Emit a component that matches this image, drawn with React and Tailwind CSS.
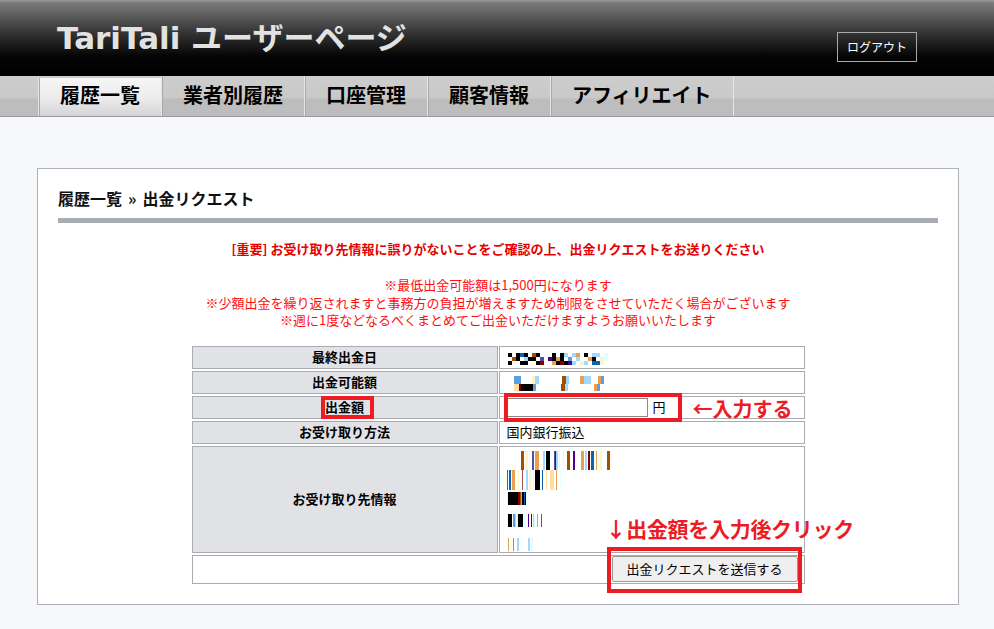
import React from "react";

const C = {
  k: "#000000", b: "#0a64b4", o: "#e8a050", r: "#a05000", p: "#500090",
  l: "#a0d8ff", c: "#fff4c8", y: "#ffe0a0", w: "#e0ffff", m: "#5050a0",
  d: "#800000", s: "#5aa0e0", n: "#a05050",
};

function stripeRects(str, x0, y, h, key) {
  const out = [];
  let i = 0;
  while (i < str.length) {
    const ch = str[i];
    let j = i;
    while (j < str.length && str[j] === ch) j++;
    if (ch !== ".") out.push(<rect key={key + "-" + i} x={x0 + i} y={y} width={j - i} height={h} fill={C[ch]} />);
    i = j;
  }
  return out;
}

function blockRects(rows, x0, y0, bw, bh, key) {
  const out = [];
  rows.forEach((row, ri) => {
    row.split("").forEach((ch, ci) => {
      if (ch !== ".") out.push(<rect key={key + ri + "-" + ci} x={x0 + ci * bw} y={y0 + ri * bh} width={bw} height={bh} fill={C[ch]} />);
    });
  });
  return out;
}

function Mosaic1() {
  return (
    <svg width="110" height="21" className="block">
      {blockRects(["k.kbk.rk...k.kl.lo.k.ll.w", ".rk.lkk.m.pkok.s.l..ok.cw", "k..kk..kd..okdkpl.cl.bbc."], 8, 6, 4, 4, "a")}
    </svg>
  );
}

function Mosaic2() {
  return (
    <svg width="110" height="21" className="block">
      {stripeRects("sssssss...........cccllll.......................rrrrlll...........oooolllllll.......ooosss", 14, 4, 8, "t")}
      {stripeRects("yyyyyddkkkkkkkkkkkksss.........................rrrrlll..........................ooosss", 14, 12, 7, "u")}
    </svg>
  );
}

function Mosaic5() {
  return (
    <svg width="130" height="107" className="block">
      {stripeRects("rrr.ccc.w..mm.oooo....ll.kkkk....mpll.c...c...rrr...pp......ooo.ll.dd.bbb..o...cc.....rrr", 21, 4, 19, "l1")}
      {stripeRects("r.bb.ooo...c...n...ll.cc..w.kkkkk..b...y...yyyy..o...w", 7, 23, 20, "l2")}
      {stripeRects("ckkkkkkkkkkdprokkbk", 7, 45, 13, "l3")}
      {stripeRects("ckkkk.ssl.ckkkkk.w...p..p.lw..o...r", 7, 67, 13, "l4")}
      {stripeRects("o....s...ll.........ll.cw", 8, 91, 13, "l5")}
    </svg>
  );
}

const leftCell = "bg-[#e1e2e6] border border-[#aaabb0] flex items-center justify-center font-bold text-[13px] text-black";
const rightCell = "bg-white border border-[#aaabb0] text-[13px] text-black";

export default function App() {
  return (
    <div className="min-h-[629px] bg-[#f7f8fc]" style={{ fontFamily: '"Noto Sans CJK JP", "Noto Sans", sans-serif' }}>
      {/* Header */}
      <div className="h-[76px] bg-[linear-gradient(to_bottom,#9a9a9a_0px,#7a7a7a_3px,#3a3a3a_30px,#050505_56px,#000_76px)] flex justify-between">
        <div
          className="ml-[57px] mt-[18px] text-[31px] font-bold text-[#e2e2e2] leading-[40px]"
          style={{ fontFamily: '"DejaVu Sans", "Noto Sans CJK JP", sans-serif' }}
        >
          TariTali ユーザーページ
        </div>
        <div className="mr-[77px] mt-[32px] w-[80px] h-[30px] border border-[#a8a8a8] flex items-center justify-center text-[12px] text-white">
          ログアウト
        </div>
      </div>

      {/* Nav */}
      <div className="h-[41px] bg-[linear-gradient(to_bottom,#cdcdcd_0px,#c9c9c9_22px,#bdbdbd_23px,#bdbdbd_40px)] border-b border-[#9a9a9a] flex pl-[38px]">
        {["履歴一覧", "業者別履歴", "口座管理", "顧客情報", "アフィリエイト"].map((t, i) => (
          <div
            key={t}
            className={
              "border-l border-[#e6e6e6] shadow-[inset_1px_0_0_#a9a9a9] px-[21px] flex items-center text-[20px] font-bold text-black leading-none " +
              (i === 0
                ? "bg-[linear-gradient(to_bottom,#f6f6f6_0px,#ececec_20px,#d4d4d4_38px)] mt-[2px] h-[38px] pb-[4px]"
                : "h-[40px] pb-[2px]")
            }
          >
            {t}
          </div>
        ))}
        <div className="h-[40px] border-l border-[#e6e6e6] shadow-[inset_1px_0_0_#a9a9a9]" />
      </div>

      {/* Panel */}
      <div className="pt-[51px] pb-[24px]">
        <div className="ml-[37px] w-[922px] bg-white border border-[#aeb0b8] px-[20px] pt-[17px] pb-[20px]">
          <div className="text-[16px] font-bold text-[#111] leading-[24px]">
            履歴一覧<span className="mx-[6px]">»</span>出金リクエスト
          </div>
          <div className="mt-[8px] h-[5px] bg-[#a8acb4]" />

          <div className="mt-[17px] text-center text-[13px] font-bold text-[#e60000] leading-[18px]">
            [重要] お受け取り先情報に誤りがないことをご確認の上、出金リクエストをお送りください
          </div>
          <div className="mt-[18px] text-center text-[13px] text-[#ff1010] leading-[17.5px]">
            <div>※最低出金可能額は1,500円になります</div>
            <div>※少額出金を繰り返されますと事務方の負担が増えますため制限をさせていただく場合がございます</div>
            <div>※週に1度などなるべくまとめてご出金いただけますようお願いいたします</div>
          </div>

          <div className="relative mx-auto mt-[17px] w-[613px] grid grid-cols-[306px_306px] gap-x-px gap-y-[2px]">
            <div className={leftCell + " h-[23px]"}>最終出金日</div>
            <div className={rightCell + " h-[23px]"}><Mosaic1 /></div>

            <div className={leftCell + " h-[23px]"}>出金可能額</div>
            <div className={rightCell + " h-[23px]"}><Mosaic2 /></div>

            <div className={leftCell + " h-[23px]"}>出金額</div>
            <div className={rightCell + " h-[23px] flex items-center pl-[6px]"}>
              <div className="w-[142px] h-[19px] border border-[#8a8a8a] bg-white" />
              <span className="ml-[5px] text-[13px] text-black">円</span>
            </div>

            <div className={leftCell + " h-[23px]"}>お受け取り方法</div>
            <div className={rightCell + " h-[23px] flex items-center pl-[7px]"}>国内銀行振込</div>

            <div className={leftCell + " h-[107px]"}>お受け取り先情報</div>
            <div className={rightCell + " h-[107px]"}><Mosaic5 /></div>

            <div className="col-span-2 h-[29px] border border-[#aaabb0] bg-white flex justify-end items-start pr-[6px]">
              <button className="w-[186px] h-[26px] bg-[#efefef] border border-[#9a9a9a] rounded-[2px] text-[13px] text-black leading-none">
                出金リクエストを送信する
              </button>
            </div>

            {/* annotations */}
            <div className="absolute left-[129px] top-[50px] w-[53px] h-[23px] border-4 border-[#ed1c24]" />
            <div className="absolute left-[312px] top-[47px] w-[178px] h-[29px] border-4 border-[#ed1c24]" />
            <div className="absolute left-[501px] top-[49px] text-[20px] font-bold text-[#ed1c24] leading-[28px] whitespace-nowrap">
              ←入力する
            </div>
            <div className="absolute left-[414px] top-[168px] text-[21px] font-bold text-[#ed1c24] leading-[28px] whitespace-nowrap tracking-[-0.3px]">
              ↓出金額を入力後クリック
            </div>
            <div className="absolute left-[415px] top-[201px] w-[195px] h-[46px] border-4 border-[#ed1c24]" />
          </div>
        </div>
      </div>
    </div>
  );
}
